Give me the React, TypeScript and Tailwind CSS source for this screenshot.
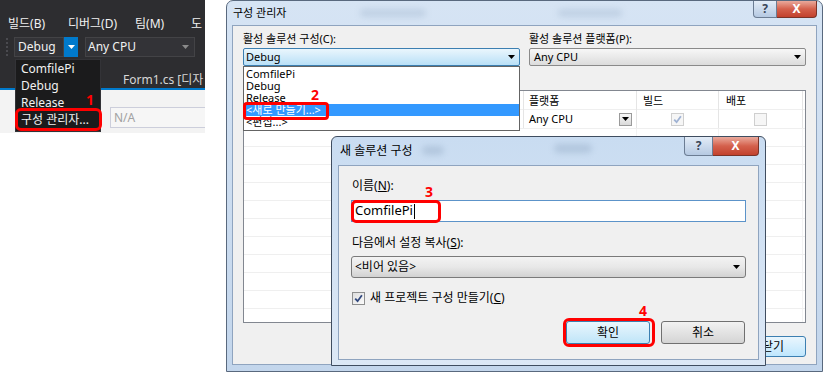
import React from "react";

const font = "font-['Noto_Sans','Noto_Sans_CJK_KR',sans-serif]";

function Caret({ color = "#000" }: { color?: string }) {
  return (
    <svg width="7" height="4" viewBox="0 0 7 4">
      <path d="M0 0h7L3.5 4z" fill={color} />
    </svg>
  );
}

function Check({ checked, dim }: { checked?: boolean; dim?: boolean }) {
  return (
    <span
      className={`flex h-[13px] w-[13px] shrink-0 items-center justify-center border ${
        dim
          ? "border-[#cfcfcf] bg-[#f6f6f6]"
          : "border-[#8e8f8f] bg-gradient-to-br from-[#dedede] to-[#fbfbfb]"
      }`}
    >
      {checked && (
        <svg width="9" height="9" viewBox="0 0 9 9">
          <path
            d="M1.2 4.6 L3.6 7.2 L7.9 1.2"
            fill="none"
            stroke={dim ? "#9fb2d3" : "#31487d"}
            strokeWidth="1.8"
          />
        </svg>
      )}
    </span>
  );
}

function CaptionButtons({ help, close, h }: { help: string; close: string; h: string }) {
  return (
    <div className="ml-auto flex self-start">
      <div
        className={`${help} ${h} flex items-center justify-center rounded-bl-[4px] border border-t-0 border-[#6b7c93] bg-gradient-to-b from-[#e3ecf7] to-[#b5c9e2] text-[12px] font-bold text-[#3a4658]`}
      >
        ?
      </div>
      <div
        className={`${close} ${h} flex items-center justify-center rounded-br-[4px] border border-l-0 border-t-0 border-[#7a3328] bg-gradient-to-b from-[#e9a99c] via-[#d4604c] to-[#c2412d] text-[12px] font-bold text-white`}
      >
        X
      </div>
    </div>
  );
}

function LeftPanel() {
  return (
    <div className="relative flex w-[205px] shrink-0 flex-col text-[12px]">
      {/* menu bar */}
      <div className="flex h-[34px] items-end bg-[#2d2d30] pb-[2px] pl-[8px] leading-[16px] text-[#f1f1f1]">
        <span className="w-[60px]">빌드(B)</span>
        <span className="w-[67px]">디버그(D)</span>
        <span className="w-[56px]">팀(M)</span>
        <span>도</span>
      </div>

      {/* toolbar */}
      <div className="flex h-[26px] items-center bg-[#2d2d30]">
        <div className="ml-[6px] h-[18px] w-[2px] border-l-2 border-dotted border-[#4a4a4f]" />
        <div className="ml-[6px] flex h-[20px] w-[50px] items-center border border-[#434346] bg-[#333337] pl-[3px] text-[#f1f1f1]">
          Debug
        </div>
        <div className="flex h-[20px] w-[14px] items-center justify-center bg-[#007acc]">
          <Caret color="#fff" />
        </div>
        <div className="ml-[7px] flex h-[20px] w-[110px] items-center justify-between border border-[#434346] bg-[#333337] pl-[2px] pr-[5px] text-[#f1f1f1]">
          <span>Any CPU</span>
          <Caret color="#8a8a8a" />
        </div>
      </div>

      {/* tab row */}
      <div className="flex h-[28px] items-end bg-[#2d2d30] pl-[123px] leading-[16px] text-[#d6d6d6]">
        <span className="whitespace-nowrap">Form1.cs [디자</span>
      </div>
      <div className="h-[2px] bg-[#007acc]" />
      <div className="h-[43px] bg-[#f3f3f3] pl-[110px] pt-[17px]">
        <div className="flex h-[21px] w-[95px] items-center border border-r-0 border-[#cccedb] bg-[#f6f6f6] pl-[3px] text-[#a2a2a2]">
          N/A
        </div>
      </div>

      {/* configuration dropdown */}
      <div className="absolute left-[15px] top-[59px] flex h-[73px] w-[86px] flex-col border border-[#333337] bg-[#1b1b1c] text-[#f1f1f1]">
        {["ComfilePi", "Debug", "Release", "구성 관리자..."].map((t) => (
          <div key={t} className="h-[17px] whitespace-nowrap pl-[5px] leading-[17px]">
            {t}
          </div>
        ))}
      </div>
      <div className="absolute left-[15px] top-[108px] h-[23px] w-[87px] rounded-[6px] border-[3px] border-[#f00]" />
      <div className="absolute left-[86px] top-[92px] text-[14px] font-bold leading-[16px] text-[#f00]">1</div>
    </div>
  );
}

function ConfigManager() {
  const cols = "grid grid-cols-[156px_124px_113px_82px_84px_1fr]";
  return (
    <div className="ml-[21px] flex h-[372px] w-[597px] shrink-0 flex-col rounded-t-[7px] border border-[#59697e] bg-gradient-to-b from-[#d6e4f4] to-[#c3d6ec] px-[5px] pb-[6px] text-[11px]">
      <div className="relative flex h-[24px]">
        <span className="ml-[1px] self-center leading-[14px] text-black">구성 관리자</span>
        {/* glass reflections of the window behind */}
        <span className="absolute left-[128px] top-[8px] h-[8px] w-[66px] rounded-full bg-[#9fb4cc] opacity-40 blur-[3px]" />
        <span className="absolute left-[326px] top-[8px] h-[8px] w-[64px] rounded-full bg-[#9fb4cc] opacity-40 blur-[3px]" />
        <CaptionButtons help="w-[24px]" close="w-[40px]" h="h-[17px]" />
      </div>
      <div className="flex flex-1 flex-col border border-[#8fa4bf] bg-[#f0f0f0] px-[10px] pt-[5px]">
        <div className="grid grid-cols-[277px_277px] gap-x-[9px]">
          <div className="flex flex-col">
            <span className="leading-[15px]">활성 솔루션 구성(C):</span>
            <div className="mt-[2px] flex h-[18px] items-center justify-between rounded-[2px] border border-[#3c7fb1] bg-gradient-to-b from-[#eaf6fd] to-[#b9e0f7] pl-[2px] pr-[4px]">
              <span>Debug</span>
              <Caret />
            </div>
          </div>
          <div className="flex flex-col">
            <span className="leading-[15px]">활성 솔루션 플랫폼(P):</span>
            <div className="mt-[2px] flex h-[18px] items-center justify-between rounded-[2px] border border-[#8a8a8a] bg-gradient-to-b from-[#f7f7f7] to-[#dcdcdc] pl-[4px] pr-[4px]">
              <span>Any CPU</span>
              <Caret />
            </div>
          </div>
        </div>

        {/* project grid */}
        <div className="mt-[24px] h-[233px] overflow-hidden border border-[#828790] bg-white">
          <div className={`${cols} h-[19px] border-b border-[#efefef] leading-[19px]`}>
            <span className="border-r border-[#e5e5e5]" />
            <span className="border-r border-[#e5e5e5]" />
            <span className="border-r border-[#e5e5e5] pl-[5px]">플랫폼</span>
            <span className="border-r border-[#e5e5e5] pl-[6px]">빌드</span>
            <span className="border-r border-[#e5e5e5] pl-[7px]">배포</span>
            <span />
          </div>
          <div className={`${cols} h-[19px] border-b border-[#efefef]`}>
            <span className="border-r border-[#e5e5e5]" />
            <span className="border-r border-[#e5e5e5]" />
            <span className="flex items-center justify-between border-r border-[#e5e5e5] pl-[5px] pr-[4px]">
              <span>Any CPU</span>
              <span className="flex h-[13px] w-[13px] items-center justify-center border border-[#9a9a9a] bg-gradient-to-b from-[#f8f8f8] to-[#dadada]">
                <Caret />
              </span>
            </span>
            <span className="flex items-center justify-center border-r border-[#e5e5e5]">
              <Check checked dim />
            </span>
            <span className="flex items-center justify-center border-r border-[#e5e5e5]">
              <Check dim />
            </span>
            <span />
          </div>
          {Array.from({ length: 11 }).map((_, i) => (
            <div key={i} className={`${cols} h-[18px] border-b border-[#efefef]`}>
              <span />
              <span />
              <span className="border-r border-[#f3f3f3]" />
              <span className="border-r border-[#f3f3f3]" />
              <span className="border-r border-[#f3f3f3]" />
              <span />
            </div>
          ))}
        </div>

        <div className="mt-[13px] flex justify-end">
          <div className="flex h-[21px] w-[66px] items-center justify-center rounded-[3px] border border-[#3c7fb1] bg-gradient-to-b from-[#eaf6fd] to-[#bee6fd] text-[12px]">
            닫기
          </div>
        </div>
      </div>
    </div>
  );
}

function NewConfigDialog() {
  return (
    <div className="absolute left-[331px] top-[136px] flex h-[230px] w-[435px] flex-col rounded-t-[6px] border border-[#3f4d60] bg-gradient-to-b from-[#c9dcf1] to-[#dce8f6] px-[6px] pb-[5px] text-[12px]">
      <div className="relative flex h-[28px]">
        <span className="ml-[2px] self-center leading-[16px]">새 솔루션 구성</span>
        <span className="absolute left-[84px] top-[9px] h-[9px] w-[22px] rounded-full bg-[#8ea5c0] opacity-40 blur-[3px]" />
        <span className="absolute left-[216px] top-[7px] h-[9px] w-[38px] rounded-full bg-[#8ea5c0] opacity-40 blur-[3px]" />
        <CaptionButtons help="w-[29px]" close="w-[46px]" h="h-[19px]" />
      </div>
      <div className="flex flex-1 flex-col border border-[#8fa4bf] bg-[#f0f0f0] px-[12px] pt-[12px]">
        <span className="pl-[1px] leading-[16px]">
          이름(<span className="underline">N</span>):
        </span>
        <div className="mt-[6px] flex h-[22px] w-[395px] items-center border border-[#5c93c9] bg-white pl-[3px] text-[13px]">
          <span>ComfilePi</span>
          <span className="ml-[1px] h-[15px] w-[1px] bg-black" />
        </div>
        <span className="mt-[13px] pl-[1px] leading-[16px]">
          다음에서 설정 복사(<span className="underline">S</span>):
        </span>
        <div className="mt-[5px] flex h-[22px] w-[395px] items-center justify-between rounded-[3px] border border-[#7a7a7a] bg-gradient-to-b from-[#f3f3f3] via-[#e8e8e8] to-[#d2d2d2] pl-[3px] pr-[5px]">
          <span>&lt;비어 있음&gt;</span>
          <Caret />
        </div>
        <div className="mt-[12px] flex h-[16px] items-center gap-[5px] pl-[1px]">
          <Check checked />
          <span className="leading-[16px]">
            새 프로젝트 구성 만들기(<span className="underline">C</span>)
          </span>
        </div>
        <div className="mt-[15px] flex justify-end gap-[11px] pr-[1px]">
          <div className="flex h-[23px] w-[84px] items-center justify-center rounded-[3px] border border-[#3c7fb1] bg-gradient-to-b from-[#eaf6fd] to-[#bfe5f8]">
            확인
          </div>
          <div className="flex h-[23px] w-[84px] items-center justify-center rounded-[3px] border border-[#707070] bg-gradient-to-b from-[#f2f2f2] to-[#d4d4d4]">
            취소
          </div>
        </div>
      </div>
    </div>
  );
}

export default function App() {
  return (
    <div className={`${font} relative flex h-[376px] w-[825px] items-start overflow-hidden bg-white text-black`}>
      <LeftPanel />
      <ConfigManager />

      {/* open list of the active configuration combo */}
      <div className="absolute left-[243px] top-[66px] flex h-[65px] w-[277px] flex-col border border-[#646464] bg-white py-[1px] text-[11px]">
        <div className="h-[12px] pl-[2px] leading-[12px]">ComfilePi</div>
        <div className="h-[12px] pl-[2px] leading-[12px]">Debug</div>
        <div className="h-[12px] pl-[2px] leading-[12px]">Release</div>
        <div className="h-[12px] bg-[#3399ff] pl-[2px] leading-[12px] text-white">&lt;새로 만들기...&gt;</div>
        <div className="h-[12px] pl-[2px] leading-[12px]">&lt;편집...&gt;</div>
      </div>

      <NewConfigDialog />

      {/* annotations */}
      <div className="absolute left-[243px] top-[102px] h-[18px] w-[86px] rounded-[4px] border-[3px] border-[#f00]" />
      <div className="absolute left-[311px] top-[87px] text-[14px] font-bold leading-[16px] text-[#f00]">2</div>
      <div className="absolute left-[351px] top-[200px] h-[23px] w-[90px] rounded-[5px] border-[3px] border-[#f00]" />
      <div className="absolute left-[425px] top-[184px] text-[14px] font-bold leading-[16px] text-[#f00]">3</div>
      <div className="absolute left-[563px] top-[318px] h-[29px] w-[92px] rounded-[6px] border-[3px] border-[#f00]" />
      <div className="absolute left-[639px] top-[303px] text-[14px] font-bold leading-[16px] text-[#f00]">4</div>
    </div>
  );
}
